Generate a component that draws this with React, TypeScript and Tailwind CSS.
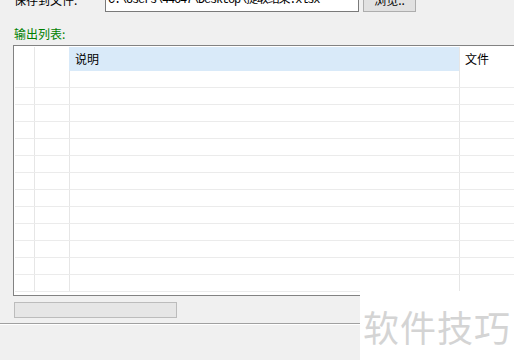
const rows = Array.from({ length: 13 })

export default function App() {
  return (
    <div className="relative w-[514px] h-[360px] overflow-hidden bg-[#f0f0f0] text-[12px] text-black font-['Noto_Sans_CJK_SC','Noto_Sans',sans-serif]">
      {/* Save-to-file row, partly scrolled off the top */}
      <div className="mt-[-12px] h-[24px] flex items-center">
        <div className="w-[105px] pl-[14px] leading-[12px]">保存到文件:</div>
        <div className="w-[254px] h-[24px] bg-white border border-[#7a7a7a] flex items-center px-[2px] overflow-hidden whitespace-nowrap font-['Liberation_Mono','Noto_Sans_CJK_SC',monospace] text-[12px] tracking-[-1.2px] leading-[12px]">
          C:\Users\44647\Desktop\提取结果.xlsx
        </div>
        <button className="ml-[4px] w-[53px] h-[24px] bg-[#e1e1e1] border border-[#adadad] flex items-center justify-center leading-[12px]">
          浏览..
        </button>
      </div>

      <div className="mt-[16px] ml-[14px] h-[12px] leading-[12px] text-[#008000]">输出列表:</div>

      {/* Output list */}
      <div className="mt-[5px] ml-[13px] w-[520px] h-[251px] border border-r-0 border-[#828282] bg-white overflow-hidden">
        <div className="flex h-[25px] pt-[1px]">
          <div className="w-[21px] shrink-0 border-r border-[#e6e6e6]" />
          <div className="w-[34px] shrink-0" />
          <div className="w-[391px] shrink-0 bg-[#d9eaf9] border-r border-[#e6e6e6] pl-[6px] flex items-center">说明</div>
          <div className="flex-1 pl-[5px] flex items-center">文件</div>
        </div>
        {rows.map((_, i) => (
          <div key={i} className="flex h-[17px] ml-[1px] border-b border-[#ebebeb]">
            <div className="w-[20px] shrink-0 border-r border-[#e6e6e6]" />
            <div className="w-[35px] shrink-0 border-r border-[#e6e6e6]" />
            <div className="w-[390px] shrink-0 border-r border-[#e6e6e6]" />
            <div className="flex-1" />
          </div>
        ))}
      </div>

      {/* Progress bar */}
      <div className="mt-[6px] ml-[14px] w-[163px] h-[16px] bg-[#e6e6e6] border border-[#bcbcbc]" />

      <div className="mt-[5px] h-[1px] bg-[#a0a0a0]" />
      <div className="h-[1px] bg-white" />

      {/* Watermark */}
      <div className="absolute right-0 bottom-0 w-[154px] h-[69px] bg-white flex items-center justify-center">
        <span className="text-[36px] leading-[40px] tracking-[1px] text-[#d4d4d4]">软件技巧</span>
      </div>
    </div>
  )
}
